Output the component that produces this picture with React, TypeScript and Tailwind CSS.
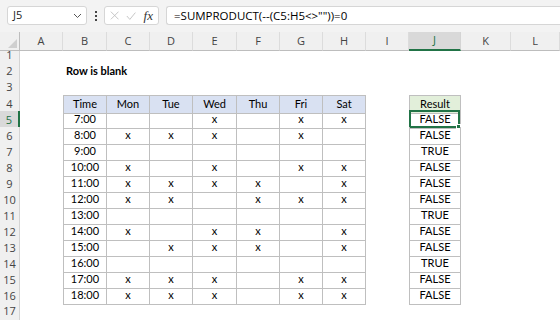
import React from "react";

const COLS = ["A", "B", "C", "D", "E", "F", "G", "H", "I", "J", "K", "L"];
const DAYS = ["Mon", "Tue", "Wed", "Thu", "Fri", "Sat"];

// time, marks Mon..Sat, result
const DATA: [string, string, string][] = [
  ["7:00", "..x.xx", "FALSE"],
  ["8:00", "xxx.x.", "FALSE"],
  ["9:00", "......", "TRUE"],
  ["10:00", "x.x.xx", "FALSE"],
  ["11:00", "xxxx.x", "FALSE"],
  ["12:00", "xx.xxx", "FALSE"],
  ["13:00", "......", "TRUE"],
  ["14:00", "x.xx.x", "FALSE"],
  ["15:00", ".xxx.x", "FALSE"],
  ["16:00", "......", "TRUE"],
  ["17:00", "xxx.xx", "FALSE"],
  ["18:00", "xxx.xx", "FALSE"],
];

const grid =
  "grid grid-cols-[20px_43px_44px_43px_43px_44px_43px_43px_43px_43px_52px_50px_1fr]";

function Cell({ children, className = "" }: { children?: React.ReactNode; className?: string }) {
  return <div className={`flex items-center justify-center overflow-visible whitespace-nowrap ${className}`}>{children}</div>;
}

function TopBar() {
  return (
    <div className="flex h-[32px] items-start bg-[#f3f3f3] pt-[6px] font-['Open_Sans',sans-serif] text-[11px] text-[#222]">
      <div className="ml-[7px] flex h-[19px] w-[80px] items-center justify-between rounded-[3px] border border-[#d6d6d6] bg-white pl-[5px] pr-[4px]">
        <span>J5</span>
        <svg width="9" height="6" viewBox="0 0 9 6" fill="none" stroke="#555" strokeWidth="1">
          <path d="M1 1l3.5 3.5L8 1" />
        </svg>
      </div>
      <div className="ml-[8px] flex h-[19px] flex-col justify-center gap-[2px]">
        <span className="block h-[2px] w-[2px] bg-[#444]" />
        <span className="block h-[2px] w-[2px] bg-[#444]" />
        <span className="block h-[2px] w-[2px] bg-[#444]" />
      </div>
      <div className="ml-[7px] flex h-[19px] w-[55px] items-center gap-[7px] rounded-[3px] border border-[#d6d6d6] bg-white px-[5px]">
        <svg width="11" height="11" viewBox="0 0 11 11" stroke="#bdbdbd" strokeWidth="1">
          <path d="M1 1l9 9M10 1l-9 9" />
        </svg>
        <svg width="12" height="10" viewBox="0 0 12 10" fill="none" stroke="#bdbdbd" strokeWidth="1">
          <path d="M1 5l3.5 4L11 1" />
        </svg>
        <span className="font-['Liberation_Serif',serif] text-[13px] italic text-[#333]">fx</span>
      </div>
      <div className="ml-[7px] flex h-[19px] flex-1 items-center rounded-l-[3px] border border-r-0 border-[#d6d6d6] bg-white pl-[7px] text-[11.5px] text-black">
        =SUMPRODUCT(--(C5:H5&lt;&gt;""))=0
      </div>
    </div>
  );
}

function ColumnHeaders() {
  return (
    <div className={`${grid} h-[15px] font-['Open_Sans',sans-serif] text-[11px] text-[#444]`}>
      <div className="relative border-b border-r border-[#bdbdbd] bg-[#f0f0f0]">
        <svg className="absolute bottom-[2px] right-[2px]" width="9" height="9" viewBox="0 0 9 9">
          <path d="M9 0V9H0Z" fill="#cfcfcf" />
        </svg>
      </div>
      {COLS.map((c) =>
        c === "J" ? (
          <Cell key={c} className="border-b-2 border-r border-b-[#217346] border-r-[#d4d4d4] bg-[#d9d9d9] text-[#217346]">
            {c}
          </Cell>
        ) : (
          <Cell key={c} className="border-b border-r border-b-[#bdbdbd] border-r-[#dcdcdc] bg-[#f0f0f0]">
            {c}
          </Cell>
        )
      )}
      <div className="border-b border-[#bdbdbd] bg-[#f0f0f0]" />
    </div>
  );
}

function RowHeader({ n }: { n: number }) {
  const active = n === 5;
  return (
    <Cell
      className={`font-['Open_Sans',sans-serif] text-[11px] ${
        active
          ? "border-r-2 border-[#217346] bg-[#d9d9d9] text-[#217346]"
          : "border-r border-[#d4d4d4] bg-[#f0f0f0] text-[#444]"
      }`}
    >
      {n}
    </Cell>
  );
}

function SheetRow({ n }: { n: number }) {
  const b = "border-[#bfbfbf]";
  const cells: React.ReactNode[] = [];
  const dataRow = n >= 5 && n <= 16 ? DATA[n - 5] : null;

  COLS.forEach((c, i) => {
    let content: React.ReactNode = null;
    let cls = "";
    const inTable = i >= 1 && i <= 7 && n >= 4 && n <= 16;
    const inResult = c === "J" && n >= 4 && n <= 16;

    if (n === 2 && c === "B") {
      cells.push(
        <div key={c} className="flex items-center pl-[3px] font-bold">
          <span className="whitespace-nowrap">Row is blank</span>
        </div>
      );
      return;
    }

    if (inTable) {
      cls = `border-b border-r ${b} ${i === 1 ? "border-l" : ""} ${n === 4 ? "border-t bg-[#d9e1f2]" : ""}`;
      if (n === 4) content = i === 1 ? "Time" : DAYS[i - 2];
      else if (dataRow) content = i === 1 ? dataRow[0] : dataRow[1][i - 2] === "x" ? "x" : null;
    }

    if (inResult) {
      cls = `relative border-b border-r border-l ${b} ${n === 4 ? "border-t bg-[#e2efda]" : ""}`;
      content = n === 4 ? "Result" : dataRow ? dataRow[2] : null;
    }

    cells.push(
      <Cell key={c} className={cls}>
        {content}
        {inResult && n === 5 && (
          <div className="pointer-events-none absolute -left-[1px] -top-[1px] h-[calc(100%+1px)] w-[calc(100%+1px)] border-2 border-[#217346]">
            <div className="absolute -bottom-[3px] -right-[3px] h-[5px] w-[5px] border border-white bg-[#217346]" />
          </div>
        )}
      </Cell>
    );
  });

  return (
    <div className={`${grid} h-[16px]`}>
      <RowHeader n={n} />
      {cells}
      <div />
    </div>
  );
}

export default function App() {
  const rows = Array.from({ length: 17 }, (_, i) => i + 1);
  return (
    <div className="h-[320px] w-[560px] overflow-hidden bg-white font-['Lato',sans-serif] text-[11px] text-black">
      <TopBar />
      <ColumnHeaders />
      {rows.map((n) => (
        <SheetRow key={n} n={n} />
      ))}
    </div>
  );
}
